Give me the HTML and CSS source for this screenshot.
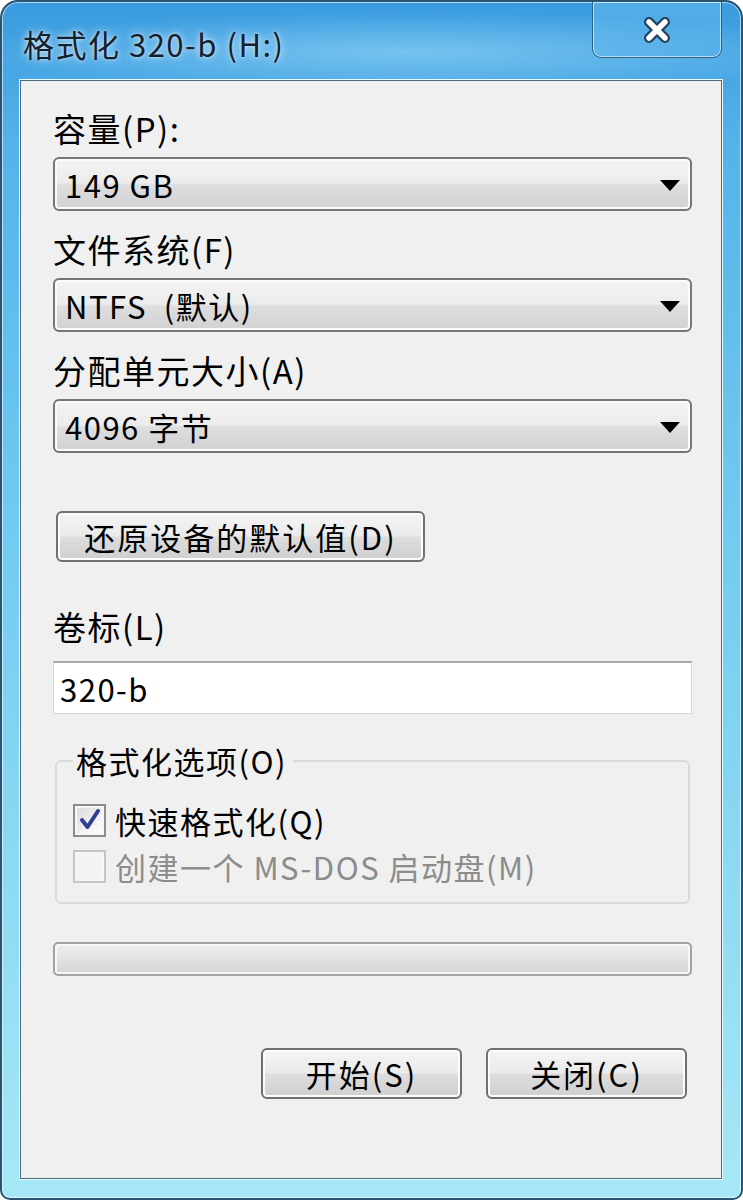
FILE: index.html
```html
<!DOCTYPE html>
<html lang="zh-CN">
<head>
  <meta charset="UTF-8" />
  <meta name="viewport" content="width=device-width, initial-scale=1.0"/>
  <title>格式化 320-b (H:)</title>
  <link rel="stylesheet" href="styles.css">
</head>
<body>
  <div class="window">
    <div class="titlebar">
      <span class="title">格式化 320-b (H:)</span>
      <button class="close" type="button" aria-label="关闭">
        <svg width="36" height="30" viewBox="0 0 36 30">
          <path d="M10 7 L26 23 M26 7 L10 23" stroke="#23415c" stroke-width="10" stroke-linecap="round"/>
          <path d="M10 7 L26 23 M26 7 L10 23" stroke="#ffffff" stroke-width="5.5" stroke-linecap="round"/>
        </svg>
      </button>
    </div>

    <div class="client">
      <label class="field-label first">容量(P):</label>
      <div class="combo"><span>149 GB</span><i class="arrow"></i></div>

      <label class="field-label">文件系统(F)</label>
      <div class="combo"><span>NTFS&nbsp;&nbsp;(默认)</span><i class="arrow"></i></div>

      <label class="field-label">分配单元大小(A)</label>
      <div class="combo"><span>4096 字节</span><i class="arrow"></i></div>

      <button class="btn restore" type="button">还原设备的默认值(D)</button>

      <label class="field-label volume">卷标(L)</label>
      <div class="textbox">320-b</div>

      <fieldset class="options">
        <legend>格式化选项(O)</legend>
        <div class="check-row">
          <span class="checkbox">
            <svg width="28" height="28" viewBox="0 0 28 28">
              <path d="M6 14 L11.5 21 L22 5" fill="none" stroke="#2d3f8e" stroke-width="4" stroke-linecap="round" stroke-linejoin="round"/>
            </svg>
          </span>
          <span>快速格式化(Q)</span>
        </div>
        <div class="check-row disabled">
          <span class="checkbox"></span>
          <span>创建一个 MS-DOS 启动盘(M)</span>
        </div>
      </fieldset>

      <div class="progress"></div>

      <div class="actions">
        <button class="btn" type="button">开始(S)</button>
        <button class="btn" type="button">关闭(C)</button>
      </div>
    </div>
  </div>
</body>
</html>
```

FILE: styles.css
```css
body {
  margin: 0;
  background: #fff;
  font-family: "Noto Sans CJK SC", "Liberation Sans", sans-serif;
  color: #000;
}
.window {
  width: 743px;
  height: 1200px;
  box-sizing: border-box;
  display: flex;
  flex-direction: column;
  padding: 0 19px 19px 18px;
  border: 2px solid #2a5473;
  border-radius: 18px 18px 10px 10px;
  background:
    radial-gradient(ellipse 60% 40px at 55% 50px, rgba(160, 220, 250, 0.55), rgba(160, 220, 250, 0) 100%),
    linear-gradient(180deg, #3a9bde 0%, #55b3ea 12%, #72cbf0 45%, #a6e8f6 100%);
  box-shadow: inset 0 0 0 1px rgba(255, 255, 255, 0.6);
}
.titlebar {
  height: 78px;
  display: flex;
  justify-content: space-between;
  align-items: flex-start;
}
.title {
  align-self: center;
  margin-left: 3px;
  margin-top: 4px;
  font-size: 31px;
  letter-spacing: 1.5px;
  color: #14202e;
  text-shadow: 0 0 8px rgba(255, 255, 255, 0.8), 0 0 3px rgba(255, 255, 255, 0.6);
}
.close {
  width: 130px;
  height: 56px;
  padding: 0;
  display: flex;
  align-items: center;
  justify-content: center;
  border: 1px solid #2f6184;
  border-top: none;
  border-radius: 0 0 9px 9px;
  background: linear-gradient(180deg, rgba(120, 200, 245, 0.4), rgba(90, 180, 235, 0.3));
  box-shadow: inset 0 0 0 1px rgba(220, 245, 255, 0.7);
}
.client {
  flex: 1;
  display: flex;
  flex-direction: column;
  padding: 27px 29px 0 32px;
  letter-spacing: 1.5px;
  background: #f0f0f0;
  border: 1px solid #4a6b7e;
  box-shadow: 0 0 0 1px #e8fbff;
}
.field-label {
  display: block;
  height: 40px;
  line-height: 40px;
  font-size: 33px;
  margin-top: 18px;
}
.field-label.first {
  margin-top: 0;
}
.combo {
  height: 54px;
  margin-top: 9px;
  box-sizing: border-box;
  display: flex;
  align-items: center;
  justify-content: space-between;
  padding: 0 10px 0 10px;
  font-size: 31px;
  border: 2px solid #767676;
  border-radius: 6px;
  background: linear-gradient(180deg, #f3f3f3 0%, #ececec 48%, #dedede 52%, #d1d1d1 100%);
  box-shadow: inset 0 0 0 2px #fbfbfb;
}
.arrow {
  width: 0;
  height: 0;
  margin-top: 2px;
  border-top: 11px solid #000;
  border-left: 10px solid transparent;
  border-right: 10px solid transparent;
}
.btn {
  height: 51px;
  box-sizing: border-box;
  padding: 0;
  font-family: inherit;
  font-size: 31px;
  letter-spacing: 2px;
  color: #000;
  border: 2px solid #707070;
  border-radius: 6px;
  background: linear-gradient(180deg, #f4f4f4 0%, #ebebeb 48%, #dddddd 52%, #cfcfcf 100%);
  box-shadow: inset 0 0 0 2px #fcfcfc;
}
.restore {
  width: 369px;
  margin-top: 58px;
  margin-left: 3px;
}
.field-label.volume {
  margin-top: 44px;
}
.textbox {
  height: 53px;
  margin-top: 15px;
  box-sizing: border-box;
  padding-left: 6px;
  display: flex;
  align-items: center;
  font-size: 31px;
  background: #fff;
  border: 1px solid #d6d8dc;
  border-top: 2px solid #a5a7ab;
}
.options {
  margin: 27px 2px 0;
  padding: 19px 0 16px 16px;
  min-inline-size: 0;
  border: 2px solid #dadada;
  border-radius: 6px;
}
.options legend {
  padding: 0 6px 0 3px;
  height: 40px;
  line-height: 40px;
  font-size: 31px;
}
.check-row {
  display: flex;
  align-items: center;
  gap: 9px;
  height: 40px;
  font-size: 31px;
}
.check-row + .check-row {
  margin-top: 6px;
}
.checkbox {
  width: 33px;
  height: 33px;
  box-sizing: border-box;
  display: flex;
  align-items: center;
  justify-content: center;
  border: 2px solid #8c8c8c;
  background: linear-gradient(135deg, #d8d8d8 0%, #f2f2f2 60%, #ffffff 100%);
  box-shadow: inset 0 0 0 2px #f6f6f6;
}
.disabled {
  color: #8c8c8c;
}
.disabled .checkbox {
  border-color: #c6c6c6;
  background: #f3f3f3;
}
.progress {
  height: 34px;
  margin-top: 38px;
  box-sizing: border-box;
  border: 2px solid #a3a3a3;
  border-radius: 5px;
  background: linear-gradient(180deg, #eeeeee 0%, #e2e2e2 50%, #d3d3d3 100%);
  box-shadow: inset 0 0 0 2px #f7f7f7;
}
.actions {
  display: flex;
  justify-content: flex-end;
  gap: 24px;
  margin-top: 72px;
  padding-right: 5px;
}
.actions .btn {
  width: 201px;
}
```
